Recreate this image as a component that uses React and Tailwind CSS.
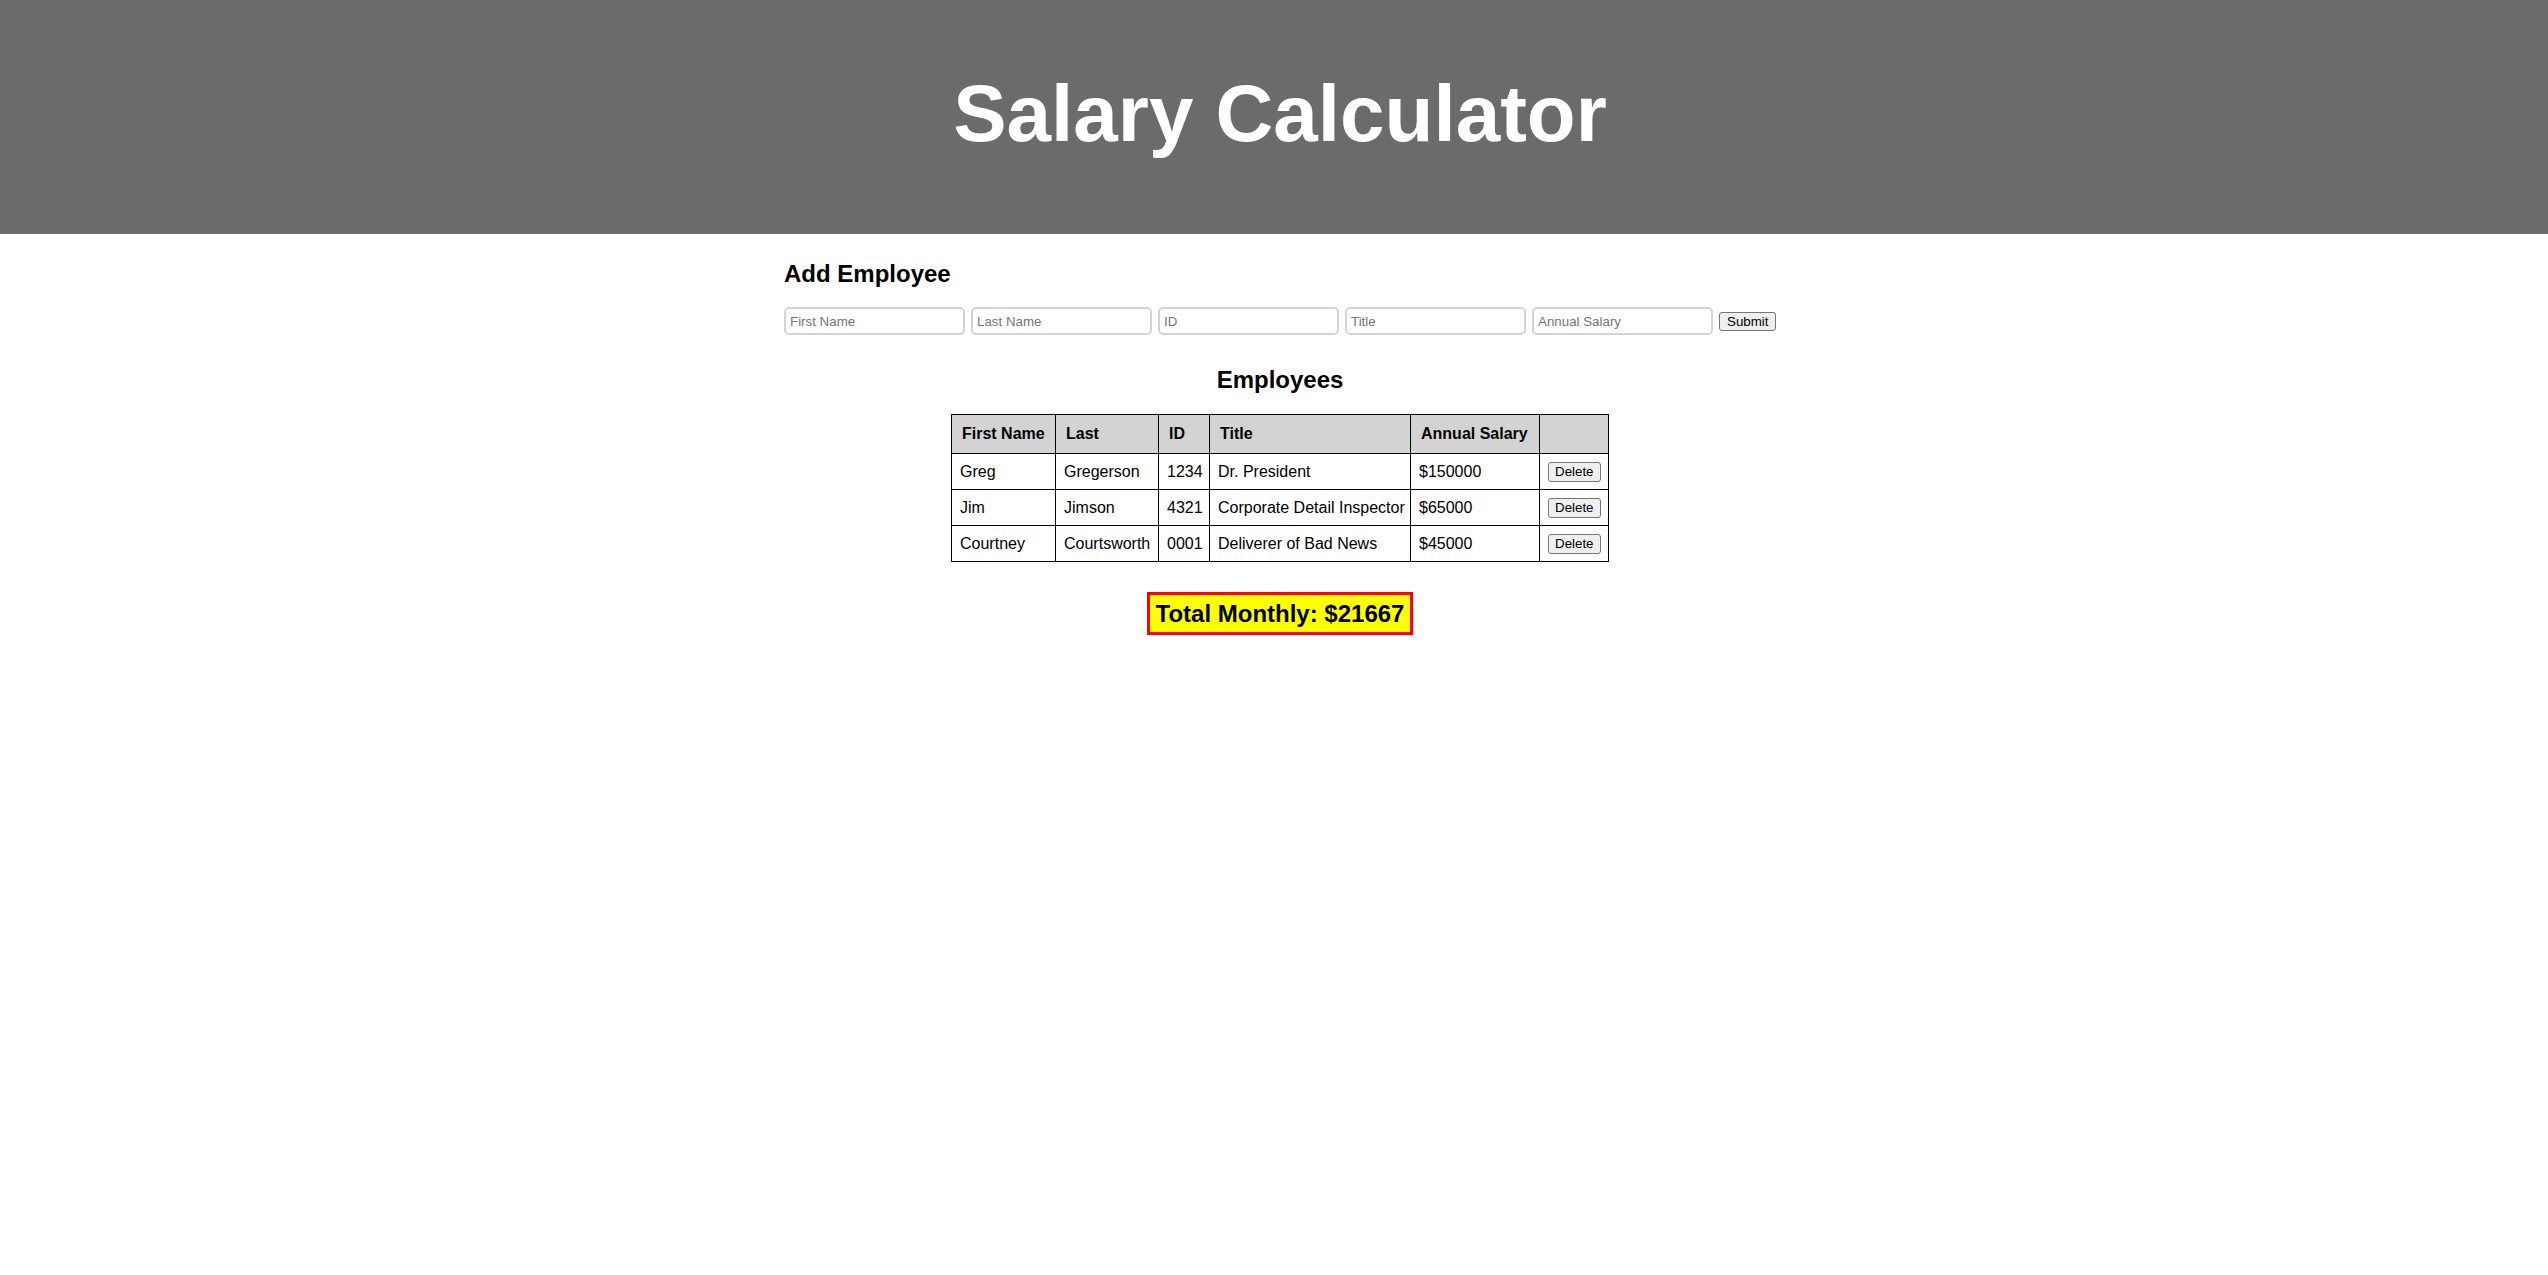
import React from "react";

const rows = [
  ["Greg", "Gregerson", "1234", "Dr. President", "$150000"],
  ["Jim", "Jimson", "4321", "Corporate Detail Inspector", "$65000"],
  ["Courtney", "Courtsworth", "0001", "Deliverer of Bad News", "$45000"],
];

const placeholders = ["First Name", "Last Name", "ID", "Title", "Annual Salary"];

export default function App() {
  return (
    <div className="min-h-screen bg-white text-black font-['Liberation_Sans',Arial,sans-serif]">
      <header className="h-[234px] bg-[#6b6b6b] pt-[68px] pl-[12px]">
        <h1 className="text-center text-[80px] leading-[92px] font-bold text-white">
          Salary Calculator
        </h1>
      </header>

      <main className="mx-auto w-[1004px] pl-[12px]">
        <h2 className="mt-[26px] text-[24px] leading-[28px] font-bold">Add Employee</h2>

        <form className="mt-[19px] flex items-center gap-[6px]" onSubmit={(e) => e.preventDefault()}>
          {placeholders.map((p) => (
            <input
              key={p}
              placeholder={p}
              className="h-[28px] w-[181px] rounded-[5px] border-2 border-[#d4d4d4] bg-white px-[4px] text-[13.33px] text-black placeholder:text-[#757575] outline-none"
            />
          ))}
          <button
            type="submit"
            className="rounded-[3px] border border-[#767676] bg-[#efefef] px-[7px] py-[1px] text-[13.33px] leading-[15px] text-black"
          >
            Submit
          </button>
        </form>

        <h2 className="mt-[31px] text-center text-[24px] leading-[28px] font-bold">Employees</h2>

        <table className="mx-auto mt-[20px] w-[657px] table-fixed border-collapse border border-black text-[16px] leading-[18px]">
          <thead>
            <tr className="bg-[#d3d3d3]">
              <th className="h-[39px] w-[104px] border border-black pl-[10px] text-left font-bold">First Name</th>
              <th className="h-[39px] w-[103px] border border-black pl-[10px] text-left font-bold">Last</th>
              <th className="h-[39px] w-[51px] border border-black pl-[10px] text-left font-bold">ID</th>
              <th className="h-[39px] w-[201px] border border-black pl-[10px] text-left font-bold">Title</th>
              <th className="h-[39px] w-[129px] border border-black pl-[10px] text-left font-bold">Annual Salary</th>
              <th className="h-[39px] w-[69px] border border-black"></th>
            </tr>
          </thead>
          <tbody>
            {rows.map((r) => (
              <tr key={r[2]}>
                {r.map((c, i) => (
                  <td key={i} className="h-[36px] border border-black pl-[8px] whitespace-nowrap">
                    {c}
                  </td>
                ))}
                <td className="h-[36px] border border-black pl-[8px]">
                  <button className="rounded-[3px] border border-[#767676] bg-[#efefef] px-[6px] py-[1px] text-[13.33px] leading-[16px] text-black">
                    Delete
                  </button>
                </td>
              </tr>
            ))}
          </tbody>
        </table>

        <div className="mt-[30px] flex justify-center">
          <div className="border-[3px] border-[#ff0000] bg-[#ffff00] px-[6px] py-[5px] text-[24px] leading-[27px] font-bold">
            Total Monthly: $21667
          </div>
        </div>
      </main>
    </div>
  );
}
